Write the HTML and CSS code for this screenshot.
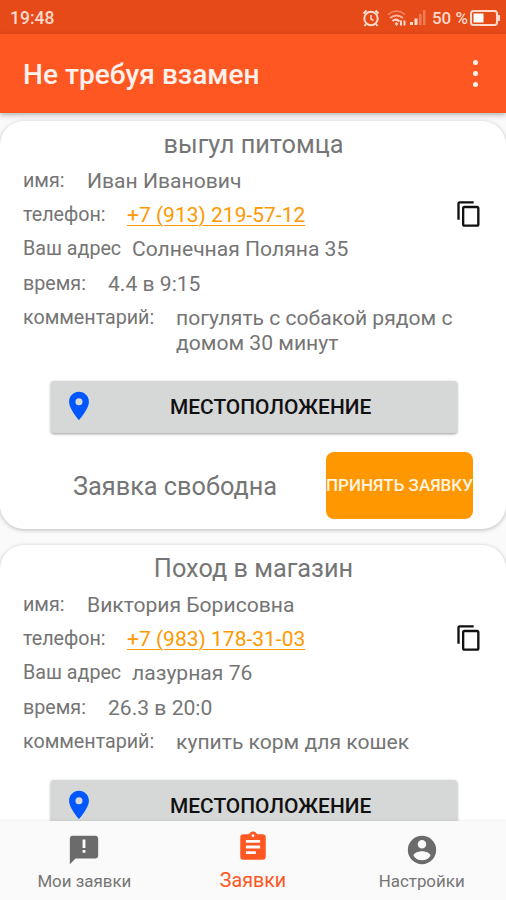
FILE: index.html
```
<!DOCTYPE html>
<html lang="ru">
<head>
<meta charset="utf-8">
<title>Не требуя взамен</title>
<link rel="stylesheet" href="styles.css">
</head>
<body>
<svg width="0" height="0" class="defs">
  <symbol id="copy" viewBox="0 0 24 24"><path d="M16 1H4c-1.100 0-2 .9-2 2v14h2V3h12V1zm3 4H8c-1.100 0-2 .9-2 2v14c0 1.100.9 2 2 2h11c1.100 0 2-.9 2-2V7c0-1.100-.9-2-2-2zm0 16H8V7h11v14z"/></symbol>
  <symbol id="pin" viewBox="0 0 24 24"><path d="M12 2C8.130 2 5 5.130 5 9c0 5.250 7 13 7 13s7-7.750 7-13c0-3.870-3.130-7-7-7zm0 9.500a2.500 2.500 0 0 1 0-5 2.500 2.500 0 0 1 0 5z"/></symbol>
</svg>
<div class="app">
  <header class="status">
    <span class="clock">19:48</span>
    <svg class="alarm" viewBox="0 0 18 18" fill="none" stroke="currentColor"><circle cx="9" cy="9.500" r="6.700" stroke-width="2"/><path d="M9 6v4l2.500 1.500" stroke-width="1.500"/><path d="M1.500 4.500l3-3M16.500 4.500l-3-3M4 15l-1.500 2M14 15l1.500 2" stroke-width="2"/></svg>
    <svg class="wifi" viewBox="0 0 20 18" fill="none" stroke="currentColor"><path d="M1 5.500Q9.500-1.500 18 5.500" stroke-width="1.600" opacity=".45"/><path d="M3 9q6.500-5 13 0" stroke-width="1.800" opacity=".75"/><path d="M5.500 12q3.500-3 7 .5" stroke-width="2"/><path d="M8.500 14l2 2" stroke-width="2.500"/><path d="M14 11.500v5M17.500 11.500v5" stroke-width="2"/></svg>
    <svg class="signal" viewBox="0 0 16 16" fill="currentColor"><path d="M0 12h3v3H0zM4.500 8.500h3V15h-3z"/><path d="M9 4h2.500v11H9zM13 0h2.500v15H13z" opacity=".35"/></svg>
    <span class="percent">50 %</span>
    <svg class="battery" viewBox="0 0 30 16"><rect x="1" y="1" width="26" height="14" rx="2.500" fill="none" stroke="currentColor" stroke-width="2"/><path d="M3.500 3.500h10v9h-10z" fill="#fff"/><path d="M28 5h2v6h-2z" fill="currentColor"/></svg>
  </header>
  <div class="toolbar"><h1>Не требуя взамен</h1><div class="more"><i></i><i></i><i></i></div></div>
  <main>
    <article class="card">
      <h2>выгул питомца</h2>
      <div class="row name"><span class="label">имя:</span><span>Иван Иванович</span></div>
      <div class="row phone"><span class="label">телефон:</span><a>+7 (913) 219-57-12</a><svg class="copy"><use href="#copy"/></svg></div>
      <div class="row address"><span class="label">Ваш адрес</span><span>Солнечная Поляна 35</span></div>
      <div class="row time"><span class="label">время:</span><span>4.4 в 9:15</span></div>
      <div class="row comment"><span class="label">комментарий:</span><span>погулять с собакой рядом с<br>домом 30 минут</span></div>
      <div class="location"><svg><use href="#pin"/></svg><span>МЕСТОПОЛОЖЕНИЕ</span></div>
      <div class="actions"><span class="state">Заявка свободна</span><div class="accept"><span>ПРИНЯТЬ ЗАЯВКУ</span></div></div>
    </article>
    <article class="card">
      <h2>Поход в магазин</h2>
      <div class="row name"><span class="label">имя:</span><span>Виктория Борисовна</span></div>
      <div class="row phone"><span class="label">телефон:</span><a>+7 (983) 178-31-03</a><svg class="copy"><use href="#copy"/></svg></div>
      <div class="row address"><span class="label">Ваш адрес</span><span>лазурная 76</span></div>
      <div class="row time"><span class="label">время:</span><span>26.3 в 20:0</span></div>
      <div class="row comment single"><span class="label">комментарий:</span><span>купить корм для кошек</span></div>
      <div class="location"><svg><use href="#pin"/></svg><span>МЕСТОПОЛОЖЕНИЕ</span></div>
    </article>
  </main>
  <nav>
    <div class="tab"><svg viewBox="0 0 24 24"><path d="M20 2H4c-1.100 0-1.990.9-1.990 2L2 22l4-4h14c1.100 0 2-.9 2-2V4c0-1.100-.9-2-2-2zm-7 12h-2v-2h2v2zm0-3.500h-2V4.500h2v6z"/></svg><span>Мои заявки</span></div>
    <div class="tab active"><svg viewBox="0 0 24 24"><path d="M19 3h-4.180C14.400 1.840 13.300 1 12 1s-2.400.84-2.820 2H5c-1.100 0-2 .9-2 2v14c0 1.100.9 2 2 2h14c1.100 0 2-.9 2-2V5c0-1.100-.9-2-2-2zm-7 0a1 1 0 0 1 0 2 1 1 0 0 1 0-2zm2 14H7v-2h7v2zm3-4H7v-2h10v2zm0-4H7V7h10v2z"/></svg><span>Заявки</span></div>
    <div class="tab"><svg viewBox="0 0 24 24"><path d="M12 2a10 10 0 1 0 0 20 10 10 0 0 0 0-20zm0 3a3 3 0 1 1 0 6 3 3 0 0 1 0-6zm0 14.200a7.200 7.200 0 0 1-6-3.220c.03-1.990 4-3.080 6-3.080s5.970 1.090 6 3.080a7.200 7.200 0 0 1-6 3.220z"/></svg><span>Настройки</span></div>
  </nav>
</div>
</body>
</html>
```
FILE: styles.css
```
* { box-sizing: border-box; }
body { margin: 0; font-family: Roboto, sans-serif; color: #757575; }
h1, h2 { margin: 0; }
.defs { display: none; }
.app { width: 506px; height: 900px; display: flex; flex-direction: column; overflow: hidden; background: #fafafa; }
.status { height: 34px; flex: none; display: flex; align-items: center; padding: 2px 6px 0 10px; background: #e64a19; color: #ffd9cb; }
.clock { font-size: 17.500px; font-weight: 500; margin-right: auto; }
.alarm { width: 18px; height: 18px; margin-right: 7px; }
.wifi { width: 20px; height: 18px; margin-right: 3px; }
.signal { width: 16px; height: 16px; margin-right: 6px; }
.percent { font-size: 17px; font-weight: 500; margin-right: 2px; }
.battery { width: 30px; height: 16px; }
.toolbar { height: 79px; flex: none; display: flex; align-items: center; justify-content: space-between; padding: 2px 28px 0 23px; background: #ff5722; position: relative; z-index: 1; box-shadow: 0 2px 5px rgba(0,0,0,.28); }
h1 { font-size: 28.100px; font-weight: 500; color: #fff2ec; }
.more { display: grid; gap: 6px; padding-bottom: 2px; }
.more i { width: 5px; height: 5px; border-radius: 50%; background: #fff2ec; }
main { flex: 1; min-height: 0; overflow: hidden; padding-top: 8px; }
.card { height: 408px; margin-bottom: 16px; padding-top: 5px; background: #fff; border-radius: 24px; box-shadow: 0 1px 4px rgba(0,0,0,.26); }
h2 { height: 38px; line-height: 38px; padding-left: 1px; font-size: 25.300px; font-weight: 400; text-align: center; }
.row { height: 34.200px; display: grid; padding: 0 23px; line-height: 34px; font-size: 21.100px; white-space: nowrap; }
.label { font-size: 19.700px; }
.name { grid-template-columns: 64px 1fr; }
.phone { grid-template-columns: 104px 1fr 28px; align-items: center; }
.phone a { font-size: 21px; }
.address { grid-template-columns: 109px 1fr; }
.time { grid-template-columns: 85px 1fr; }
.comment { grid-template-columns: 153px 1fr; height: 80px; }
.single { height: 55px; }
.comment span:last-child { line-height: 25px; padding-top: 4px; }
.phone a { color: #ff9800; text-decoration: underline; text-decoration-thickness: 1px; text-underline-offset: 3px; }
.copy { width: 28px; height: 28px; margin-bottom: 2px; fill: #111; }
.location { width: 406px; height: 52px; margin: 0 0 0 51px; display: grid; grid-template-columns: 56px 1fr; align-items: center; background: #d6d7d7; border-radius: 3px; box-shadow: 0 1px 3px rgba(0,0,0,.4); color: #111; font-size: 20.900px; font-weight: 500; }
.location svg { width: 34px; height: 34px; margin: 0 0 2px 11px; fill: #0057ff; }
.location span { padding-left: 63px; }
.actions { display: flex; align-items: center; justify-content: space-between; padding: 19px 33px 0 73px; }
.state { font-size: 25.300px; padding-top: 2px; }
.accept { width: 147px; height: 67px; display: flex; align-items: center; justify-content: center; border-radius: 8px; background: #ff9800; color: #fff5e2; font-size: 17px; font-weight: 500; white-space: nowrap; }
nav { height: 79px; flex: none; display: grid; grid-template-columns: repeat(3, 1fr); background: #fafafa; position: relative; z-index: 1; box-shadow: 0 -1px 2px rgba(0,0,0,.06); }
.tab { display: flex; flex-direction: column; align-items: center; padding-top: 12px; font-size: 16.900px; }
.tab svg { width: 34px; height: 34px; fill: #6b6b6b; }
.tab span { line-height: 26px; margin-top: 1px; }
.tab.active { color: #ff5722; font-size: 19.700px; padding-top: 9px; }
.tab.active svg { fill: #ff5722; }
.tab.active span { margin-top: 4px; }
```
